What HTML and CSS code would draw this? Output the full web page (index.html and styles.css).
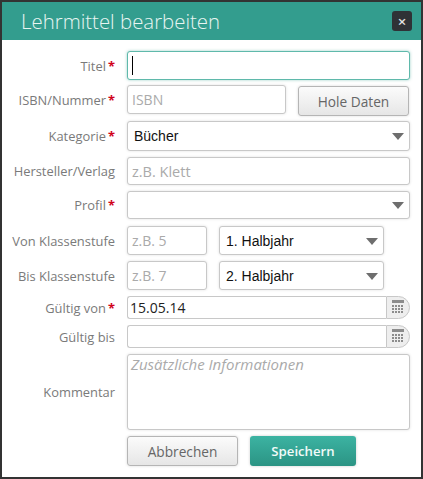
FILE: index.html
```html
<!DOCTYPE html>
<html lang="de">
<head>
    <meta charset="UTF-8">
    <title>Lehrmittel bearbeiten</title>
    <link rel="stylesheet" href="styles.css">
</head>
<body>
<div class="dialog">
    <div class="dialog-header">
        <h1>Lehrmittel bearbeiten</h1>
        <button class="close" type="button">&times;</button>
    </div>
    <form class="dialog-body">
        <div class="row row-title">
            <label class="label">Titel<span class="req">*</span></label>
            <div class="control focused"><input type="text"><span class="caret"></span></div>
        </div>
        <div class="row row-isbn">
            <label class="label">ISBN/Nummer<span class="req">*</span></label>
            <input class="isbn" type="text" placeholder="ISBN">
            <button class="btn btn-fetch" type="button">Hole Daten</button>
        </div>
        <div class="row row-cat">
            <label class="label">Kategorie<span class="req">*</span></label>
            <div class="select"><select><option>Bücher</option></select></div>
        </div>
        <div class="row row-maker">
            <label class="label">Hersteller/Verlag</label>
            <input type="text" placeholder="z.B. Klett">
        </div>
        <div class="row row-profile">
            <label class="label">Profil<span class="req">*</span></label>
            <div class="select"><select><option></option></select></div>
        </div>
        <div class="row row-from">
            <label class="label">Von Klassenstufe</label>
            <input class="grade" type="text" placeholder="z.B. 5">
            <div class="select halfyear"><select><option>1. Halbjahr</option></select></div>
        </div>
        <div class="row row-to">
            <label class="label">Bis Klassenstufe</label>
            <input class="grade" type="text" placeholder="z.B. 7">
            <div class="select halfyear"><select><option>2. Halbjahr</option></select></div>
        </div>
        <div class="row row-date">
            <label class="label">Gültig von<span class="req">*</span></label>
            <div class="date">
                <input type="text" value="15.05.14">
                <span class="date-btn">
                    <svg width="14" height="15" viewBox="0 0 14 15">
                        <rect x="1" y="0" width="12" height="3" fill="#8c8c8c"/>
                        <path d="M1 5h2v2H1zM4 5h2v2H4zM7 5h2v2H7zM10 5h2v2h-2zM1 8h2v2H1zM4 8h2v2H4zM7 8h2v2H7zM10 8h2v2h-2zM1 11h2v2H1zM4 11h2v2H4zM7 11h2v2H7zM10 11h2v2h-2z" fill="#8c8c8c"/>
                    </svg>
                </span>
            </div>
        </div>
        <div class="row row-date-end">
            <label class="label">Gültig bis</label>
            <div class="date">
                <input type="text">
                <span class="date-btn">
                    <svg width="14" height="15" viewBox="0 0 14 15">
                        <rect x="1" y="0" width="12" height="3" fill="#8c8c8c"/>
                        <path d="M1 5h2v2H1zM4 5h2v2H4zM7 5h2v2H7zM10 5h2v2h-2zM1 8h2v2H1zM4 8h2v2H4zM7 8h2v2H7zM10 8h2v2h-2zM1 11h2v2H1zM4 11h2v2H4zM7 11h2v2H7zM10 11h2v2h-2z" fill="#8c8c8c"/>
                    </svg>
                </span>
            </div>
        </div>
        <div class="row row-comment">
            <label class="label">Kommentar</label>
            <textarea placeholder="Zusätzliche Informationen"></textarea>
        </div>
        <div class="actions">
            <button class="btn btn-cancel" type="button">Abbrechen</button>
            <button class="btn btn-save" type="button">Speichern</button>
        </div>
    </form>
</div>
</body>
</html>
```
FILE: styles.css
```css
* {
    box-sizing: border-box;
}
html, body {
    height: 100%;
}
body {
    margin: 0;
    font-family: "Open Sans", sans-serif;
    font-size: 12.9px;
    color: #7a7a7a;
    background: #fff;
}
.dialog {
    height: 479px;
    border: 2px solid #333;
    background: #fff;
}
.dialog-header {
    display: flex;
    align-items: center;
    justify-content: space-between;
    height: 38px;
    padding: 0 9px 0 19px;
    background: #339d8e;
}
.dialog-header h1 {
    margin: 0;
    font-size: 20.4px;
    font-weight: 300;
    color: #e8f5f2;
}
.close {
    width: 20px;
    height: 20px;
    padding: 0;
    border: 0;
    border-radius: 3px;
    background: #2f3236;
    color: #e4e4e4;
    font: 600 15px/20px "Open Sans", sans-serif;
}
.dialog-body {
    padding: 11px 11px 0 0;
}
.row {
    display: flex;
    align-items: center;
    height: 29px;
    margin-bottom: 5px;
}
.label {
    flex: 0 0 113px;
    text-align: right;
    margin-right: 12px;
    white-space: nowrap;
}
.req {
    margin-left: 2px;
    color: #d0021b;
    font-weight: bold;
}
input, select, textarea {
    display: block;
    width: 100%;
    height: 100%;
    margin: 0;
    padding: 0 4px;
    border: 1px solid #c8c8c8;
    border-radius: 3px;
    background: #fff;
    box-shadow: 0 0 3px rgba(0, 0, 0, 0.12);
    font-family: "Open Sans", sans-serif;
    font-size: 14px;
    color: #222;
    outline: none;
}
input::placeholder, textarea::placeholder {
    color: #aaa;
    opacity: 1;
}
.row > input {
    flex: 1;
}
.control {
    position: relative;
    flex: 1;
    height: 100%;
}
.focused input {
    border-color: #5fb9ab;
    box-shadow: 0 0 3px rgba(51, 157, 142, 0.5);
}
.caret {
    position: absolute;
    left: 5px;
    top: 5px;
    width: 1px;
    height: 19px;
    background: #000;
}
.row > input.isbn {
    flex: 0 0 159px;
}
.btn {
    height: 30px;
    border-radius: 3px;
    font-family: "Open Sans", sans-serif;
    font-size: 13.7px;
    cursor: pointer;
}
.btn-fetch, .btn-cancel {
    border: 1px solid #b5b5b5;
    background: linear-gradient(#fbfbfb, #e6e6e6);
    color: #666;
    box-shadow: 0 0 3px rgba(0, 0, 0, 0.15);
}
.btn-fetch {
    width: 111px;
    margin: 3px 0 0 12px;
}
.select {
    position: relative;
    flex: 1;
    height: 100%;
}
.select select {
    appearance: none;
    padding: 0 6px;
    font-family: "Liberation Sans", sans-serif;
    font-size: 14px;
    color: #111;
}
.select::after {
    content: "";
    position: absolute;
    right: 6px;
    top: 50%;
    margin-top: -3px;
    border-left: 6px solid transparent;
    border-right: 6px solid transparent;
    border-top: 7px solid #6e6e6e;
}
.row-cat {
    height: 30px;
    margin-bottom: 6px;
}
.row-isbn {
    margin-bottom: 7px;
}
.row-maker {
    height: 28px;
    margin-bottom: 6px;
}
.row-maker input {
    font-size: 14.5px;
}
.row-profile {
    height: 28px;
    margin-bottom: 7px;
}
.row-from {
    margin-bottom: 6px;
}
.row-to {
    margin-bottom: 6px;
}
.row > input.grade {
    flex: 0 0 80px;
}
.select.halfyear {
    flex: 0 0 165px;
    margin-left: 12px;
}
.date {
    flex: 1;
    display: flex;
    height: 100%;
}
.row-date, .row-date-end {
    height: 23px;
    margin-bottom: 6px;
}
.date input {
    flex: 1;
    width: auto;
    border-right: 0;
    border-radius: 3px 0 0 3px;
    padding: 0 2px;
    box-shadow: none;
}
.date-btn {
    flex: 0 0 24px;
    display: flex;
    align-items: center;
    justify-content: center;
    border: 1px solid #c8c8c8;
    border-radius: 0 12px 12px 0;
    background: #eee;
}
.row-comment {
    height: 76px;
    margin-bottom: 6px;
}
textarea {
    flex: 1;
    width: auto;
    padding: 0 3px;
    resize: none;
    font-size: 15px;
    line-height: 18px;
}
textarea::placeholder {
    font-style: italic;
}
.actions {
    display: flex;
    gap: 12px;
    margin-left: 125px;
}
.btn-cancel {
    width: 111px;
}
.btn-save {
    width: 106px;
    border: 0;
    background: linear-gradient(#3cb3a2, #2b9484);
    color: #f2fbf9;
    font-weight: 600;
    font-size: 13.2px;
    box-shadow: 0 0 3px rgba(0, 0, 0, 0.2);
}
```
